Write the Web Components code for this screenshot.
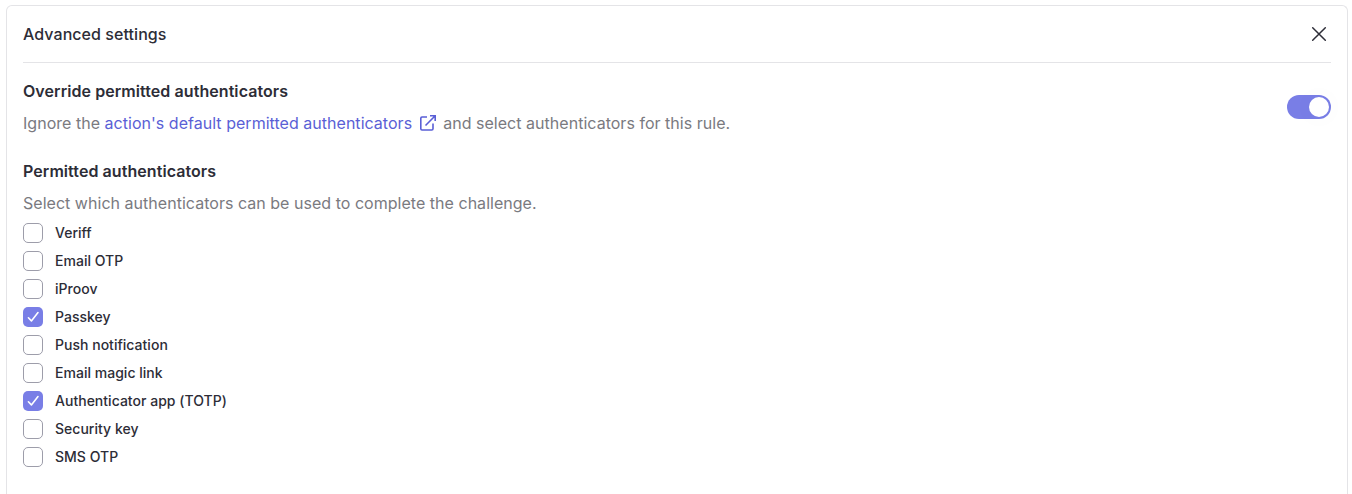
<!DOCTYPE html>
<html lang="en">
<head>
<meta charset="utf-8">
<title>Advanced settings</title>
<style>
html,body{margin:0;height:100%;overflow:hidden;background:#fff}
body{font-family:Inter,"Liberation Sans",sans-serif;color:#2d2d37}
</style>
</head>
<body>
<settings-panel heading="Advanced settings">
  <setting-row heading="Override permitted authenticators">Ignore the <external-link>action's default permitted authenticators</external-link> and select authenticators for this rule.
    <toggle-switch slot="control"></toggle-switch>
  </setting-row>
  <setting-row heading="Permitted authenticators">Select which authenticators can be used to complete the challenge.</setting-row>
  <check-list>
    <check-option>Veriff</check-option>
    <check-option>Email OTP</check-option>
    <check-option>iProov</check-option>
    <check-option checked>Passkey</check-option>
    <check-option>Push notification</check-option>
    <check-option>Email magic link</check-option>
    <check-option checked>Authenticator app (TOTP)</check-option>
    <check-option>Security key</check-option>
    <check-option>SMS OTP</check-option>
  </check-list>
</settings-panel>
<script>
function define(name, render) {
  customElements.define(name, class extends HTMLElement {
    constructor() {
      super();
      this.attachShadow({mode: 'open'});
    }
    connectedCallback() {
      this.shadowRoot.innerHTML = render(this);
    }
  });
}

define('settings-panel', el => `
<style>
:host{display:block;box-sizing:border-box;height:100%;margin:0 4px 0 6px;padding-top:5px}
section{box-sizing:border-box;height:100%;border:1px solid #e4e4e7;border-bottom:0;border-radius:6px 6px 0 0;padding:0 16px}
header{display:flex;align-items:center;justify-content:space-between;height:56px;border-bottom:1px solid #e4e4e7}
h2{margin:0;font-size:16px;line-height:24px;font-weight:500;letter-spacing:.06px}
button{display:flex;padding:0;border:0;background:none;color:inherit}
</style>
<section>
  <header><h2>${el.getAttribute('heading')}</h2>
  <button aria-label="Close"><svg width="24" height="24" viewBox="0 0 24 24" fill="none" stroke="currentColor" stroke-width="1.5" stroke-linecap="round"><path d="M5.7 5.7l12.6 12.6M18.3 5.7l-12.6 12.6"/></svg></button></header>
  <slot></slot>
</section>`);

define('setting-row', el => `
<style>
:host{display:flex;align-items:center;justify-content:space-between;height:56px;padding-top:16px}
:host(:nth-of-type(n+2)){padding-top:24px}
h3{margin:0 0 8px;font-size:16px;line-height:24px;font-weight:600;letter-spacing:.07px}
p{margin:0;font-size:16px;line-height:24px;letter-spacing:.028px;color:#7a7a7f;white-space:nowrap}
</style>
<div><h3>${el.getAttribute('heading')}</h3><p><slot></slot></p></div>
<slot name="control"></slot>`);

define('external-link', () => `
<style>
:host{display:inline;color:#5a5fd6}
svg{width:18px;height:18px;margin:0 2px 0 6.5px;vertical-align:-3px}
</style><slot></slot><svg viewBox="0 0 18 18" fill="none" stroke="currentColor" stroke-width="1.6"><path stroke-linejoin="round" d="M8 3H3Q1.8 3 1.8 4.2V14.8Q1.8 16 3 16H12.8Q14 16 14 14.8V9.5"/><path d="M6.5 11.5L16.2 1.8M11 1.8H16.2V7"/></svg>`);

define('toggle-switch', () => `
<style>
:host{display:flex;box-sizing:border-box;width:44px;height:24px;padding:2px;justify-content:flex-end;border-radius:12px;background:#797ee6}
i{width:20px;height:20px;border-radius:50%;background:#fff;box-shadow:0 0 24px 8px rgba(0,0,0,.012)}
</style><i></i>`);

define('check-list', () => `
<style>:host{display:flex;flex-direction:column;gap:8px;padding-top:8px}</style><slot></slot>`);

define('check-option', el => `
<style>
:host{display:flex;align-items:center;gap:12px;height:20px;font-size:14px;line-height:20px;font-weight:500;letter-spacing:.02px}
i{display:flex;box-sizing:border-box;width:20px;height:20px;border:1px solid #9d9daa;border-radius:5px;background:#fff}
:host([checked]) i{border:0;background:#797ee6}
</style>
<i>${el.hasAttribute('checked') ? '<svg width="20" height="20" viewBox="0 0 20 20" fill="none" stroke="#fff" stroke-width="1.6" stroke-linecap="round" stroke-linejoin="round"><path d="M5.4 10.8l3 3.1L15 5.6"/></svg>' : ''}</i><slot></slot>`);
</script>
</body>
</html>
